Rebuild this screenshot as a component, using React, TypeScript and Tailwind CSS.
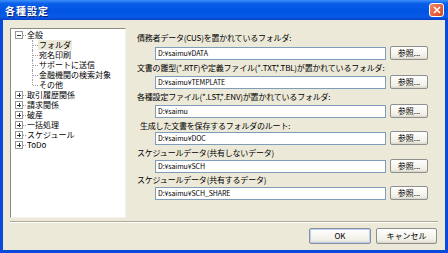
import React from "react";

const folders = [
  { label: "債務者データ(CUS)を置かれているフォルダ:", value: "D:¥saimu¥DATA", lt: "mt-0", it: "mt-[3px]", indent: "pl-0" },
  { label: "文書の雛型(*.RTF)や定義ファイル(*.TXT,*.TBL)が置かれているフォルダ:", value: "D:¥saimu¥TEMPLATE", lt: "mt-[3px]", it: "mt-[2px]", indent: "pl-0" },
  { label: "各種設定ファイル(*.LST,*.ENV)が置かれているフォルダ:", value: "D:¥saimu", lt: "mt-[3px]", it: "mt-[2px]", indent: "pl-0" },
  { label: "生成した文書を保存するフォルダのルート:", value: "D:¥saimu¥DOC", lt: "mt-[3px]", it: "mt-0", indent: "pl-[3px]" },
  { label: "スケジュールデータ(共有しないデータ)", value: "D:¥saimu¥SCH", lt: "mt-[3px]", it: "mt-[1px]", indent: "pl-0" },
  { label: "スケジュールデータ(共有するデータ)", value: "D:¥saimu¥SCH_SHARE", lt: "mt-[2px]", it: "mt-[1px]", indent: "pl-0" },
];

const roots = ["取引履歴関係", "請求関係", "破産", "一括処理", "スケジュール", "ToDo"];
const children = ["フォルダ", "宛名印刷", "サポートに送信", "金融機関の検索対象", "その他"];

const Expander = ({ open }: { open: boolean }) => (
  <span className="absolute left-[4px] top-[1px] flex h-[8px] w-[8px] items-center justify-center border border-[#919b9c] bg-white">
    <span className="absolute h-px w-[4px] bg-[#333]" />
    {!open && <span className="absolute h-[4px] w-px bg-[#333]" />}
  </span>
);

const XpButton = ({ children, className = "" }: { children: React.ReactNode; className?: string }) => (
  <button className={`flex items-center justify-center rounded-[2px] border border-[#8e8f8f] bg-[linear-gradient(#fefefd,#f1efe6_80%,#d8d5c8)] text-[8px] leading-none text-black ${className}`}>
    {children}
  </button>
);

export default function App() {
  return (
    <div className="flex h-[253px] w-[448px] flex-col bg-[#0a49dc] px-[3px] pb-[3px] font-['Noto_Sans_CJK_JP','Liberation_Sans',sans-serif] text-black">
      {/* title bar */}
      <div className="-mx-[3px] flex h-[20px] items-center justify-between bg-[linear-gradient(#3d8ff8,#0a5fe9_18%,#0054e3_55%,#0a5ae8_85%,#0740c6)] pl-[5px] pr-[4px]">
        <span className="text-[10px] font-bold tracking-[1px] text-white [text-shadow:1px_1px_0_#0a1f6e]">各種設定</span>
        <span className="flex h-[14px] w-[15px] items-center justify-center rounded-[3px] border border-white bg-[linear-gradient(135deg,#f08a6a,#d9421c)]">
          <svg width="8" height="8" viewBox="0 0 8 8">
            <path d="M1 1 L7 7 M7 1 L1 7" stroke="white" strokeWidth="1.6" />
          </svg>
        </span>
      </div>

      <div className="flex flex-1 flex-col bg-[#ece9d8] px-[7px] pt-[8px]">
        <div className="flex">
          {/* tree */}
          <div className="h-[190px] w-[116px] border border-b-[#f4f3ee] border-l-[#8d8b80] border-r-[#f4f3ee] border-t-[#8d8b80] bg-white pt-[1px] text-[8px] leading-[10px]">
            <div className="relative h-[10px]">
              <Expander open />
              <span className="absolute left-[12px] top-[5px] w-[3px] border-t border-dotted border-[#a0a0a0]" />
              <span className="absolute left-[16px] top-0">全般</span>
            </div>
            {children.map((c, i) => (
              <div key={c} className="relative h-[10px]">
                <span
                  className={`absolute left-[21px] top-0 border-l border-dotted border-[#a0a0a0] ${i === children.length - 1 ? "h-[5px]" : "h-[10px]"}`}
                />
                <span className="absolute left-[22px] top-[5px] w-[5px] border-t border-dotted border-[#a0a0a0]" />
                <span className={`absolute left-[27px] top-0 px-px ${i === 0 ? "bg-[#ece9d8]" : ""}`}>{c}</span>
              </div>
            ))}
            {roots.map((r) => (
              <div key={r} className="relative h-[10px]">
                <Expander open={false} />
                <span className="absolute left-[12px] top-[5px] w-[3px] border-t border-dotted border-[#a0a0a0]" />
                <span className="absolute left-[16px] top-0">{r}</span>
              </div>
            ))}
          </div>

          {/* folder settings */}
          <div className="ml-[11px] flex w-[291px] flex-col pt-[5px] text-[8px]">
            {folders.map((f) => (
              <div key={f.label} className="flex flex-col">
                <div className={`h-[10px] leading-[10px] tracking-[-0.2px] whitespace-nowrap ${f.lt} ${f.indent}`}>{f.label}</div>
                <div className={`flex h-[14px] items-center ${f.it}`}>
                  <div className="ml-[18px] flex h-[13px] w-[231px] items-center border border-[#7f9db9] bg-white pl-[2px] text-[7px] leading-none tracking-[-0.1px]">
                    {f.value}
                  </div>
                  <XpButton className="ml-auto h-[14px] w-[38px]">参照...</XpButton>
                </div>
              </div>
            ))}
          </div>
        </div>

        {/* separator */}
        <div className="mt-[3px] border-b border-t border-b-white border-t-[#aca899]" />

        {/* buttons */}
        <div className="mt-[5px] flex justify-end gap-[5px] pr-px">
          <XpButton className="h-[16px] w-[62px] border-[#2d4f8a] shadow-[inset_0_0_0_1px_#b9d1fa]">OK</XpButton>
          <XpButton className="h-[16px] w-[61px]">キャンセル</XpButton>
        </div>
      </div>
    </div>
  );
}
